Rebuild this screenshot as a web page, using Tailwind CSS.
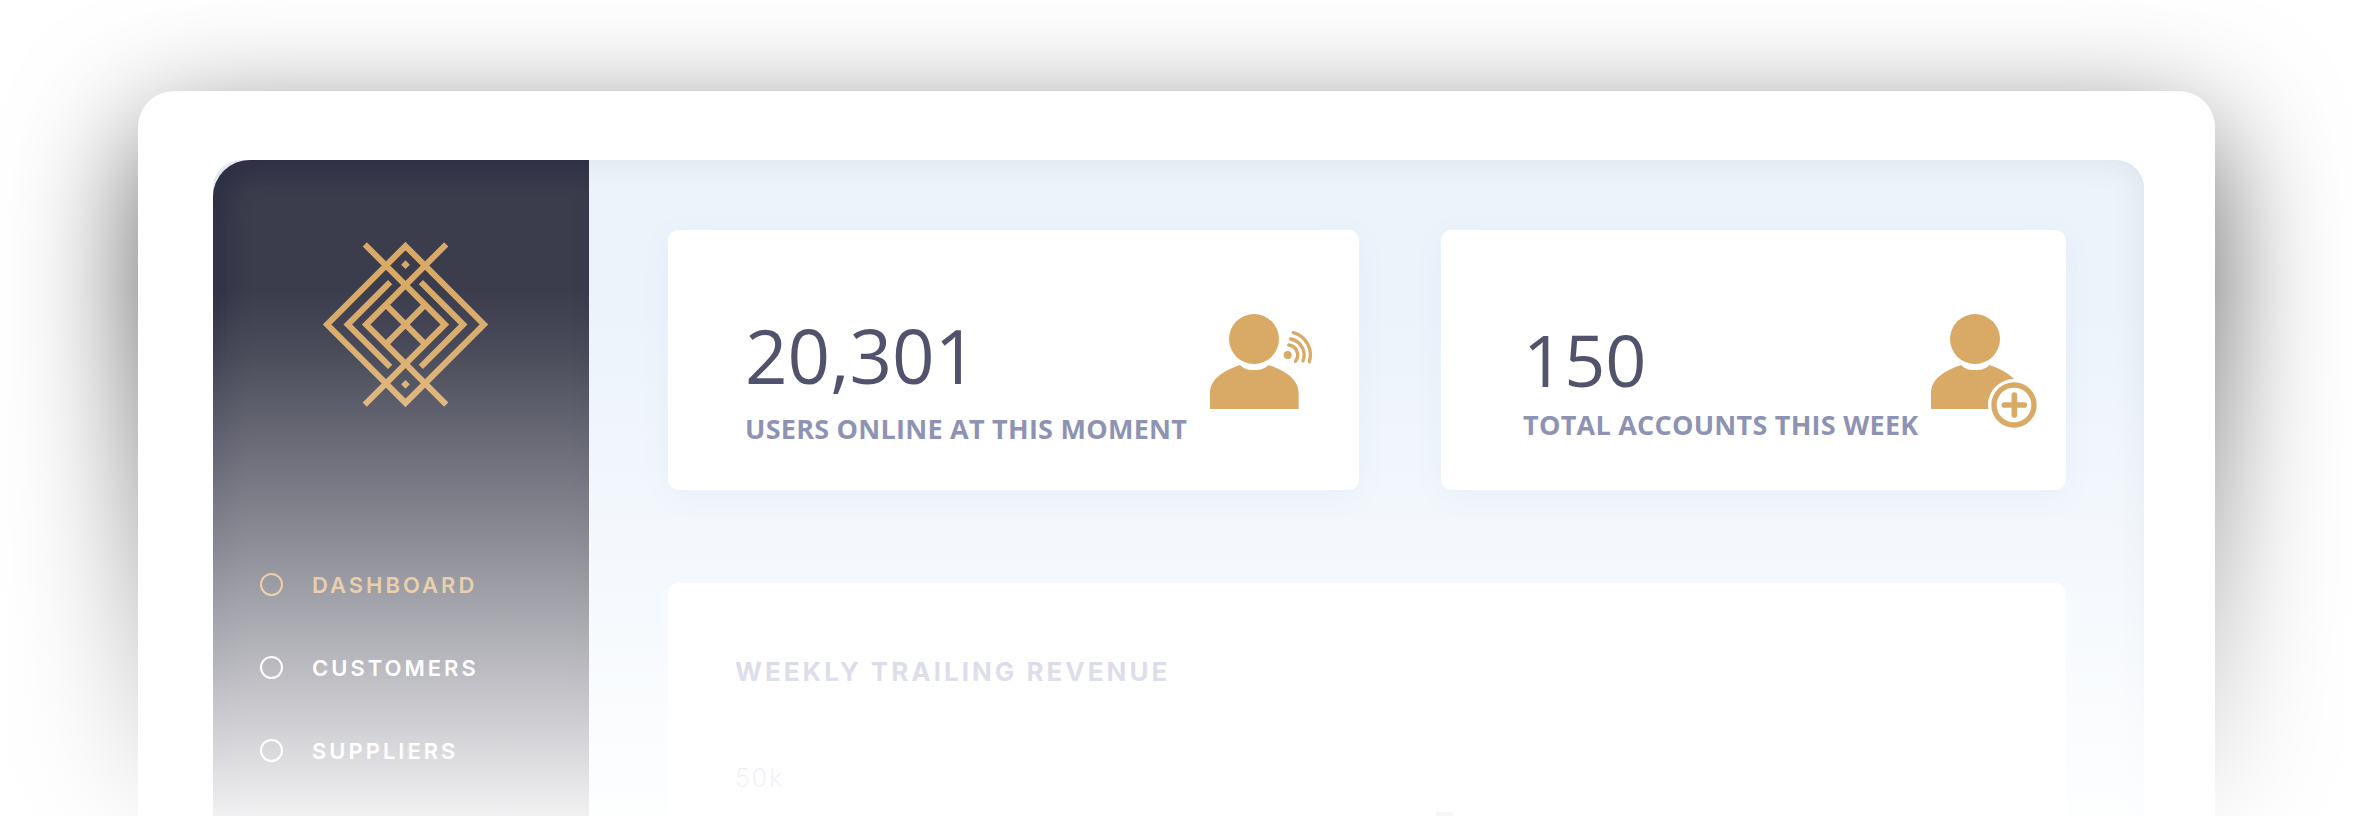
<!DOCTYPE html>
<html>
<head>
<meta charset="utf-8">
<script src="https://cdn.jsdelivr.net/npm/@tailwindcss/browser@4"></script>
</head>
<body class="bg-white">
<div class="relative h-[816px] w-[2353px] overflow-hidden bg-white pt-[91px] pl-[138px] font-['Open_Sans',sans-serif]">
  <!-- outer white frame -->
  <div class="h-[900px] w-[2077px] rounded-[36px] bg-white pt-[69px] pl-[75px] shadow-[0_40px_125px_rgba(0,0,0,0.62)]">
    <!-- app window -->
    <div class="relative flex h-[800px] w-[1931px] rounded-t-[28px] bg-[#ecf3fb]">
      <!-- sidebar -->
      <aside class="flex w-[376px] shrink-0 flex-col rounded-tl-[37px] bg-[#3b3c4c] pt-[81px] pl-[47px] shadow-[inset_10px_10px_24px_rgba(32,32,60,0.45)]">
        <svg class="ml-[62px] h-[167px] w-[167px]" viewBox="-250 -250 500 500" fill="none" stroke="#d9a966" stroke-width="18">
          <path d="M0-235 235 0 0 235-235 0Z"/>
          <path d="M-122-240 118 0-122 240"/>
          <path d="M122-240-118 0 122 240"/>
          <path d="M-57-57 58 58M57-57-58 58"/>
          <path d="M-46-127-173 0-46 127M46-127 173 0 46 127"/>
          <path d="M0-192 13-179 0-166-13-179Z M0 166 13 179 0 192-13 179Z" fill="#d9a966" stroke="none"/>
        </svg>
        <nav class="mt-[165px] flex flex-col gap-[60px] font-['Inter',sans-serif] text-[22px] leading-[22px] font-semibold tracking-[3px] text-white">
          <a class="flex items-center gap-[29px] text-[#d4a15c]"><span class="h-[23px] w-[23px] rounded-full border-2 border-[#d4a15c]"></span>DASHBOARD</a>
          <a class="flex items-center gap-[29px]"><span class="h-[23px] w-[23px] rounded-full border-2 border-white"></span>CUSTOMERS</a>
          <a class="flex items-center gap-[29px]"><span class="h-[23px] w-[23px] rounded-full border-2 border-white"></span>SUPPLIERS</a>
        </nav>
      </aside>
      <!-- main -->
      <main class="flex-1 pt-[70px] pl-[79px]">
        <div class="flex gap-[82px]">
          <section class="relative z-10 flex h-[260px] w-[691px] rounded-[10px] bg-white pr-[29px] pl-[77px] shadow-[0_6px_30px_rgba(90,120,180,0.06)]">
            <div class="min-w-0 flex-1 pt-[75px]">
              <p class="text-[74.5px] leading-[100px] text-[#50536b]">20,301</p>
              <p class="mt-[5px] text-[27px] leading-[38px] font-bold tracking-[0.25px] whitespace-nowrap text-[#8f93b3]">USERS ONLINE AT THIS MOMENT</p>
            </div>
            <svg class="mt-[60px] h-[140px] w-[160px] shrink-0" viewBox="0 0 480 420" fill="#d9a966">
              <circle cx="252" cy="147" r="75"/>
              <path d="M120 357V310C120 265 165 240 210 225C225 240 240 240 252 240C265 240 280 240 295 225C340 240 386 265 386 310V357Z"/>
              <circle cx="353" cy="195" r="12"/>
              <g fill="none" stroke="#d9a966" stroke-width="10" stroke-linecap="round">
                <path d="M356 165A30 30 0 0 1 376 214"/>
                <path d="M362 147A49 49 0 0 1 399 213"/>
                <path d="M370 128A69 69 0 0 1 418 215"/>
              </g>
            </svg>
          </section>
          <section class="relative z-10 flex h-[260px] w-[625px] rounded-[10px] bg-white pr-[5px] pl-[82px] shadow-[0_6px_30px_rgba(90,120,180,0.06)]">
            <div class="min-w-0 flex-1 pt-[79px]">
              <p class="text-[72px] leading-[100px] text-[#50536b]">150</p>
              <p class="-mt-[3px] text-[27px] leading-[38px] font-bold tracking-[0.25px] whitespace-nowrap text-[#8f93b3]">TOTAL ACCOUNTS THIS WEEK</p>
            </div>
            <svg class="mt-[60px] h-[150px] w-[170px] shrink-0" viewBox="0 0 510 450" fill="#d9a966">
              <circle cx="252" cy="147" r="75"/>
              <path d="M120 357V310C120 265 165 240 210 225C225 240 240 240 252 240C265 240 280 240 295 225C340 240 386 265 386 310V357Z"/>
              <circle cx="369" cy="345" r="78" fill="#fff"/>
              <circle cx="369" cy="345" r="60" fill="#fff" stroke="#d9a966" stroke-width="16"/>
              <path d="M370 315V375M340 345H400" fill="none" stroke="#d9a966" stroke-width="17" stroke-linecap="round"/>
            </svg>
          </section>
        </div>
        <section class="mt-[93px] h-[400px] w-[1398px] rounded-[10px] bg-white pt-[72px] pl-[67px]">
          <h2 class="font-['Inter',sans-serif] text-[26px] leading-[34px] font-bold tracking-[3px] text-[#9a9ec0]">WEEKLY TRAILING REVENUE</h2>
          <p class="mt-[72px] font-['Inter',sans-serif] text-[25px] leading-[34px] font-light tracking-[2px] text-[#9a9ec0]">50k</p>
          <div class="mt-[17px] ml-[701px] h-[5px] w-[17px] bg-[#999999]"></div>
        </section>
      </main>
      <!-- inner shade along the window's edge -->
      <div class="pointer-events-none absolute inset-0 rounded-t-[28px] shadow-[inset_0_0_32px_rgba(40,50,70,0.09)]"></div>
    </div>
  </div>
  <!-- fade to white over the lower part of the page -->
  <div class="pointer-events-none absolute inset-0 bg-[linear-gradient(to_bottom,rgba(255,255,255,0)_290px,rgba(255,255,255,0.08)_350px,rgba(255,255,255,0.41)_540px,rgba(255,255,255,0.93)_816px)]"></div>
</div>
</body>
</html>
